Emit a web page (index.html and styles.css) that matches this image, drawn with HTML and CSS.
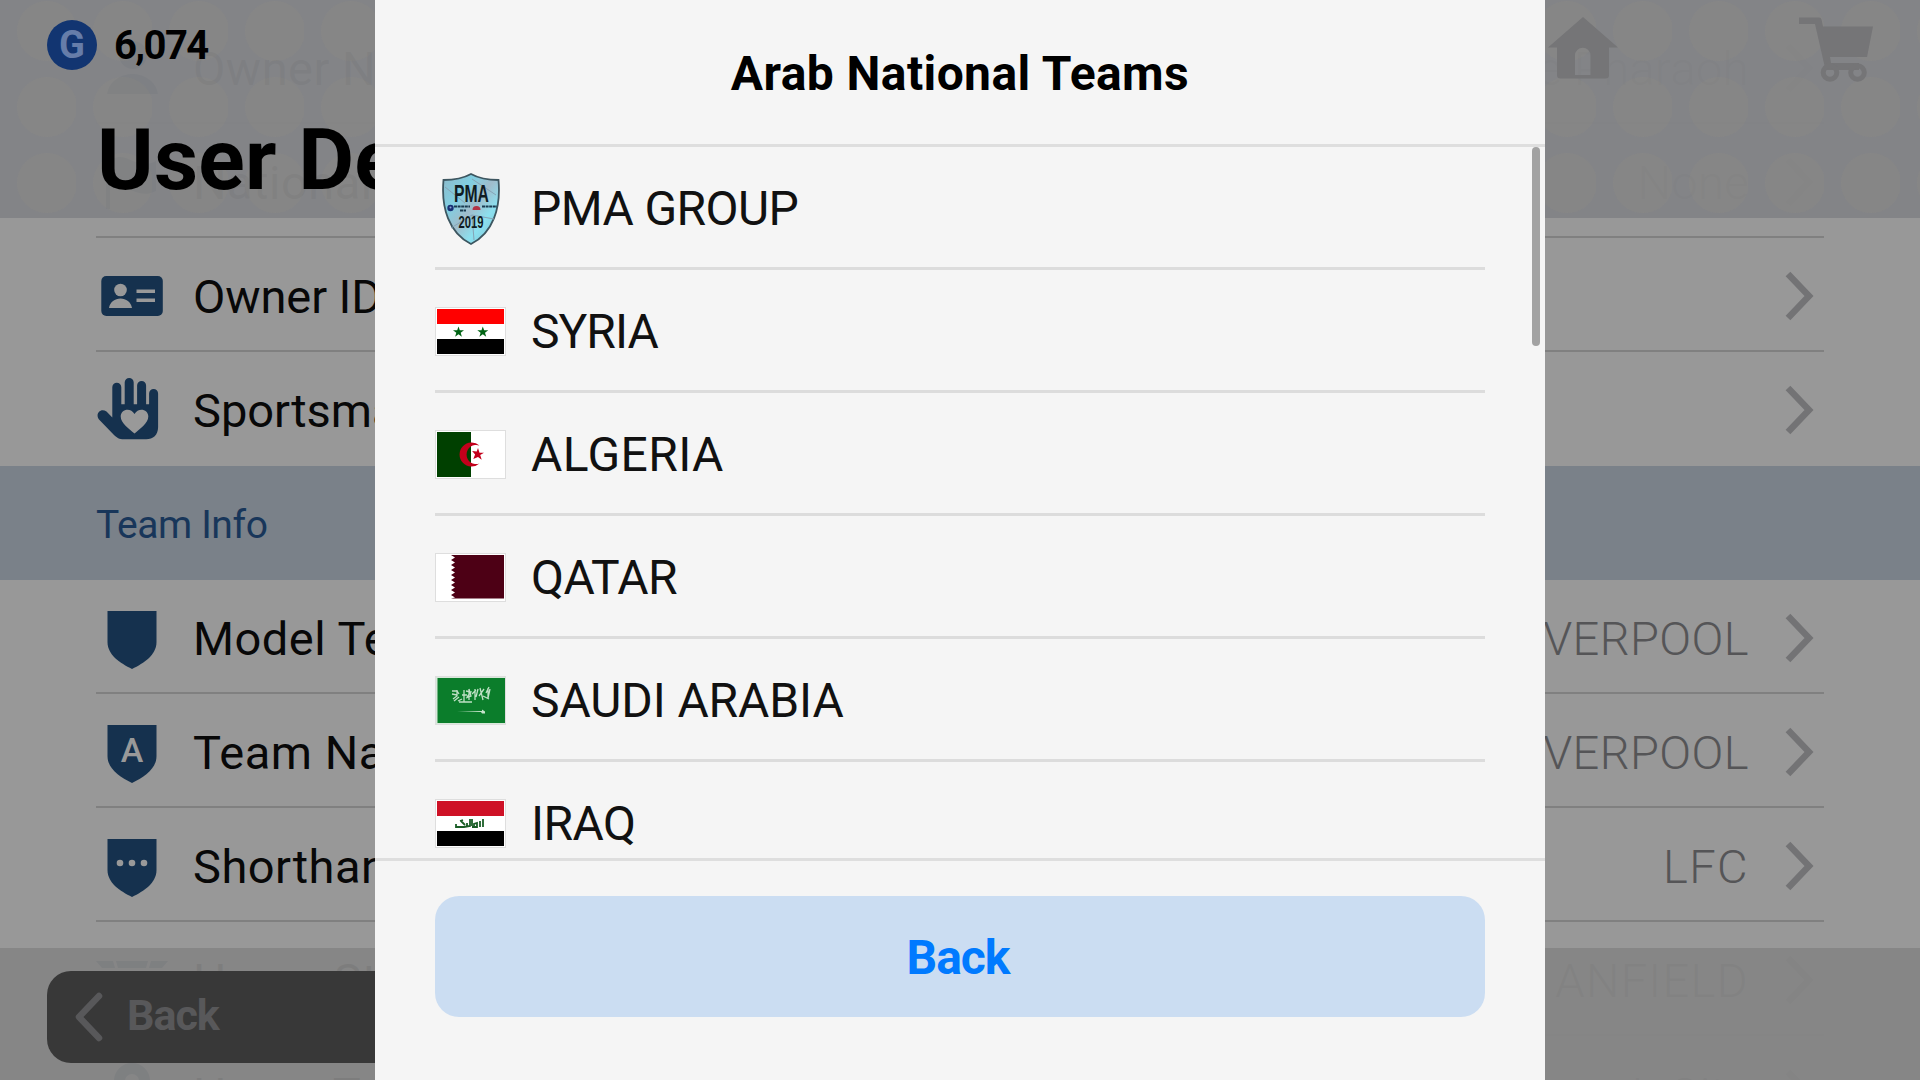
FILE: index.html
```
<!DOCTYPE html>
<html lang="en">
<head>
<meta charset="utf-8">
<title>User Details</title>
<link rel="stylesheet" href="styles.css">
</head>
<body>
<svg class="defs" aria-hidden="true">
  <symbol id="chevron" viewBox="0 0 30 50"><path d="M4 3 25 25 4 47" fill="none" stroke="currentColor" stroke-width="6.500"/></symbol>
  <symbol id="shield" viewBox="0 0 72 72"><path d="M11.500 10h49v31C60.500 54 48 62 36 68 24 62 11.500 54 11.500 41Z" fill="currentColor"/></symbol>
</svg>
<main class="screen">
  <section class="list">
    <div class="row"><svg class="icon" viewBox="0 0 72 72"><circle cx="37" cy="24" r="14"/><path d="M11 63C13 50 25 43 36.500 43S60 50 62 63Z"/></svg><span class="label">Owner Name</span><span class="value">The Pharaoh</span><svg class="chev"><use href="#chevron"/></svg></div>
    <div class="row"><svg class="icon" viewBox="0 0 72 72"><path d="M10 10h4v54h-4zM17 14c14-8 24 12 43 2v30c-19 10-29-10-43-2z"/></svg><span class="label">Nationality</span><span class="value">None</span><svg class="chev"><use href="#chevron"/></svg></div>
    <div class="row"><svg class="icon" viewBox="0 0 72 72"><rect x="5.300" y="17" width="61.500" height="40" rx="5"/><g fill="#999"><circle cx="24.500" cy="31" r="6.300"/><path d="M13 49c1-6 6-9.500 11.500-9.500S35 43 36 49zM40.500 30.500H59v3.500H40.500zM40.500 39.500H59V43H40.500z"/></g></svg><span class="label id">Owner ID</span><svg class="chev end"><use href="#chevron"/></svg></div>
    <div class="row last"><svg class="icon" viewBox="0 0 72 72"><path d="M16.300 44.500V14.200a4.500 4.500 0 0 1 9 0V31.300h3.400V9.500a4.500 4.500 0 0 1 9 0v21.800h3.400V12.500a4.500 4.500 0 0 1 9 0v18.800h3V20.500a4.500 4.500 0 0 1 9 0V54c0 8-5 12.300-12 12.300H28c-5 0-7-1.500-10-4.300L3 46.500c-4-5 1-12 7.500-8Z"/><path d="M38.500 60.500C33 56 24.700 50 24.700 43.500c0-7.500 10-9.500 13.800-2.500 3.800-7 13.800-5 13.800 2.500C52.300 50 44 56 38.500 60.500Z" fill="#999"/></svg><span class="label sport">Sportsmanship</span><svg class="chev end"><use href="#chevron"/></svg></div>
    <h2 class="band">Team Info</h2>
    <div class="row"><svg class="icon"><use href="#shield"/></svg><span class="label">Model Team</span><span class="value">LIVERPOOL</span><svg class="chev"><use href="#chevron"/></svg></div>
    <div class="row"><svg class="icon" viewBox="0 0 72 72"><use href="#shield"/><text class="mark" x="36" y="46.500">A</text></svg><span class="label">Team Name</span><span class="value">LIVERPOOL</span><svg class="chev"><use href="#chevron"/></svg></div>
    <div class="row"><svg class="icon" viewBox="0 0 72 72"><use href="#shield"/><g fill="#999"><circle cx="24" cy="34" r="3.300"/><circle cx="36" cy="34" r="3.300"/><circle cx="48" cy="34" r="3.300"/></g></svg><span class="label">Shorthand</span><span class="value wide">LFC</span><svg class="chev"><use href="#chevron"/></svg></div>
    <div class="row"><svg class="icon" viewBox="0 0 72 72"><path d="M0 18h17l2 7H6zM20 18h32l-2 7H22zM55 18h17l-6 7H53z"/></svg><span class="label">Home Stadium</span><span class="value wide">ANFIELD</span><svg class="chev"><use href="#chevron"/></svg></div>
    <div class="row"><svg class="icon" viewBox="0 0 72 72"><path fill-rule="evenodd" d="M36 6a18 18 0 0 1 18 18c0 14-18 38-18 38S18 38 18 24A18 18 0 0 1 36 6Zm0 11a7 7 0 1 0 0 14 7 7 0 0 0 0-14Z"/></svg><span class="label">Home Town</span><span class="value">L City</span><svg class="chev"><use href="#chevron"/></svg></div>
  </section>

  <header class="top">
    <div class="status">
      <span class="coin">G</span><span class="amount">6,074</span>
      <svg class="home" viewBox="0 0 70 63"><path fill-rule="evenodd" d="M35 0 70 30.500H61V58q0 3.500-3.500 3.500h-45Q9 61.500 9 58V30.500H0ZM27 58H42.500V38.500a7.750 7.750 0 0 0-15.500 0Z"/></svg>
      <svg class="cart" viewBox="0 0 75 66"><path d="M0 .5h20q2 0 2.500 2L24 9.500H74L68 40H31l1 6h28v7H26.500L16 7H0Z"/><g fill="none" stroke="#757577" stroke-width="5"><circle cx="31" cy="55.500" r="6.800"/><circle cx="58.500" cy="55.500" r="6.800"/></g></svg>
    </div>
    <h1 class="title">User Details</h1>
  </header>

  <footer class="bottom">
    <div class="back-dim"><svg viewBox="0 0 28 50"><path d="M24 4 4 25 24 46"/></svg><span>Back</span></div>
  </footer>
</main>

<section class="modal">
  <h2 class="modal-title"><span>Arab National Teams</span></h2>
  <div class="teams">
    <div class="team"><svg class="crest" viewBox="0 0 58 72"><defs><linearGradient id="ice" x2="1" y2="1"><stop offset="0" stop-color="#8fb9c9"/><stop offset=".3" stop-color="#80cfe2"/><stop offset=".5" stop-color="#a0bccb"/><stop offset=".7" stop-color="#8ce0ef"/><stop offset="1" stop-color="#79bfd0"/></linearGradient></defs><path d="M29 1C20 6 10 7 1.500 7-1 35 7 60 29 71 51 60 59 35 56.500 7 48 7 38 6 29 1Z" fill="url(#ice)" stroke="#3d5660" stroke-width="1.800"/><path d="M30 6 54 22M30 42 9 55M30 42l2 25M3 14l20 16M30 42 52 46" stroke="#86a3b5" stroke-width="1" fill="none"/><text x="29.500" y="28.500" font-size="23" textLength="35" lengthAdjust="spacingAndGlyphs">PMA</text><text x="29" y="54.500" font-size="16.500" textLength="25" lengthAdjust="spacingAndGlyphs">2019</text><path d="M12 33.500h16M40 33.500h15M18 37.500h6" stroke="#1b3b50" stroke-width="2.200" stroke-dasharray="3 .6"/><circle cx="8.500" cy="35" r="3.200" fill="#172f75"/><circle cx="8.500" cy="34.500" r="1" fill="#91a5d0"/><path d="M30.500 37a4 4 0 0 1 8 0z" fill="#b33345"/></svg><span>PMA GROUP</span></div>
    <div class="team"><svg class="flag" viewBox="0 0 69 47"><path fill="#fff" d="M0 0h69v47H0z"/><path fill="red" d="M1 1h67v15H1z"/><path d="M1 31h67v15H1z"/><path id="star" fill="#006414" d="m22.500 18.500 1.300 3.700h4.200l-3.300 2.500 1.200 4-3.400-2.400-3.400 2.400 1.200-4-3.300-2.500h4.200z"/><use href="#star" x="24.300"/></svg><span class="snug">SYRIA</span></div>
    <div class="team"><svg class="flag" viewBox="0 0 69 47"><path fill="#fff" d="M0 0h69v47H0z"/><path fill="#004000" d="M1 1h34v45H1z"/><path fill="#c3001b" d="M43.500 14.500a12 12 0 1 0 0 18 9.600 9.600 0 1 1 0-18ZM42 17l1.500 4.700h4.500l-3.800 2.300 1.500 4.700-3.700-2.600-4.700 1.900 1.800-4.400-3-3.500 4.600.4z"/></svg><span class="open">ALGERIA</span></div>
    <div class="team"><svg class="flag" viewBox="0 0 69 47"><path fill="#fff" d="M0 0h69v47H0z"/><path fill="#4d0015" d="M68 1H15l4 2.500-4 2.500 4 2.500-4 2.500 4 2.500-4 2.500 4 2.500-4 2.500 4 2.500-4 2.500 4 2.500-4 2.500 4 2.500-4 2.500 4 2.500-4 2.500 4 2.500-4 1h53z"/></svg><span>QATAR</span></div>
    <div class="team"><svg class="flag" viewBox="0 0 69 47"><path fill="#d8e9da" d="M0 0h69v47H0z"/><path fill="#0b7d2b" d="M1.500 1H69v45H1.500z"/><path d="M16 14h5l2 3m0 3-5 4m-2-7 5 1m0-5v6l-4 3m5 2 4-2m2-9v12h-5m7-11 5 1-4 5m-5-2h5m2-6v11m-5 2h8m-3-13 2 7-5 2m9-9v11m-3-6 4-4m2-1-2 8m4-9 3 12m1-11-5 7m9-8v10m2-9-2 9m-5-2 6 3m-3-6 3-6" fill="none" stroke="#bfe0c5" stroke-width="1.300"/><path d="M21 34h25v-1.500l3 2v2h-3l-1-1.500-24-1z" fill="#c7e4cc"/></svg><span class="saudi">SAUDI ARABIA</span></div>
    <div class="team"><svg class="flag" viewBox="0 0 69 47"><path fill="#fff" d="M0 0h69v47H0z"/><path fill="#ce1126" d="M1 1h67v15H1z"/><path d="M1 31h67v15H1z"/><path d="M20 28V24m0 3h8l6-1v-7m-9 2 4 4m-5-4 3-1m4 7v-4m5 3v-7m0 8h5v-4l-3 1v3m6 0v-6m3 6v-8" fill="none" stroke="#195d25" stroke-width="1.800"/></svg><span>IRAQ</span></div>
    <i class="scroll"></i>
  </div>
  <div class="modal-foot"><button class="back"><span>Back</span></button></div>
</section>
</body>
</html>
```
FILE: styles.css
```
* { box-sizing: border-box; }
body { margin: 0; width: 1920px; height: 1080px; overflow: hidden; position: relative; background: #989898; font-family: Roboto, "Liberation Sans", sans-serif; color: #080808; }
h1, h2 { margin: 0; }
.defs { position: absolute; width: 0; height: 0; }
.screen { height: 1080px; overflow: hidden; }

.list { padding-top: 10px; }
.row { display: flex; align-items: center; height: 114px; margin: 0 96px; padding: 2px 10px 0 0; border-bottom: 2px solid #808080; font-size: 47px; white-space: nowrap; }
.row.last { border-bottom: 0; padding-top: 0; }
.icon { width: 72px; height: 72px; flex: none; color: #15314e; fill: #15314e; }
.mark { font-size: 34px; font-weight: 500; fill: #999; text-anchor: middle; }
.label { flex: 1; padding: 2px 0 0 25px; letter-spacing: .5px; }
.label.id { letter-spacing: -.1px; }
.label.sport { letter-spacing: 0; }
.value { padding-top: 2px; color: #555557; font-weight: 300; letter-spacing: .4px; }
.value.wide { letter-spacing: 1.4px; }
.chev { width: 30px; height: 50px; color: #737375; margin: 1px 0 0 35px; flex: none; }
.band { height: 114px; display: flex; align-items: center; padding: 4px 96px 0; background: #7a8189; color: #18365a; font-size: 39px; font-weight: 400; letter-spacing: -.4px; }

.top { position: absolute; inset: 0 0 auto; height: 218px; isolation: isolate; color: #000; }
.top::before { content: ""; position: absolute; inset: 0; z-index: -1; opacity: .96; background: #838487 radial-gradient(circle at 47px 31px, #868686 29.500px, transparent 30.500px) 0 0 / 76px 76px; }
.status { display: flex; height: 90px; padding-left: 47px; align-items: center; }
.coin { width: 50px; height: 50px; border-radius: 50%; background: #123571; color: #667da9; font-size: 38px; font-weight: 700; line-height: 51px; text-align: center; }
.amount { margin-left: 17px; font-size: 40px; font-weight: 700; letter-spacing: -1.600px; }
.home { width: 70px; height: 63px; margin: 6px 181px 0 auto; fill: #757577; }
.cart { width: 75px; height: 66px; margin: 9px 46px 0 0; fill: #757577; }
.title { padding-left: 97px; font-size: 86px; line-height: 100px; margin-top: 20px; font-weight: 700; letter-spacing: .2px; }

.bottom { position: absolute; inset: 948px 0 0; padding: 23px 47px; background: rgba(133, 133, 133, .94); }
.back-dim { display: flex; align-items: center; width: 440px; height: 92px; padding-left: 28px; border-radius: 24px; background: #383838; color: #58585a; font-size: 43px; font-weight: 700; letter-spacing: -1px; }
.back-dim span { padding-bottom: 4px; }
.back-dim svg { width: 28px; height: 50px; margin-right: 24px; fill: none; stroke: #58585a; stroke-width: 6.500; stroke-linecap: round; stroke-linejoin: round; }

.modal { position: absolute; inset: 0 375px; display: flex; flex-direction: column; background: #f5f5f5; color: #111; }
.modal-title { height: 147px; display: flex; align-items: center; justify-content: center; padding-top: 3px; border-bottom: 3px solid #dedede; font-size: 48px; font-weight: 700; letter-spacing: .4px; color: #000; }
.teams { position: relative; height: 711px; overflow: hidden; padding: 0 60px; }
.team { display: flex; align-items: center; height: 123px; border-bottom: 3px solid #dcdcdc; font-size: 48px; white-space: nowrap; }
.team span { padding-top: 2px; margin-left: 26px; letter-spacing: -.6px; }
.team .snug { letter-spacing: -1px; }
.team .open { letter-spacing: .4px; }
.team .saudi { letter-spacing: -.1px; }
.flag { width: 69px; height: 47px; margin: 3px 0 0 1px; outline: 1px solid #dedede; }
.crest { width: 58px; height: 72px; margin: 3px 5px 0 7px; font-family: "Liberation Sans Narrow", "Liberation Sans", sans-serif; font-weight: 700; text-anchor: middle; fill: #101b22; }
.scroll { position: absolute; top: 0; right: 5px; width: 8px; height: 199px; border-radius: 4px; background: #a2a2a2; }
.modal-foot { flex: 1; border-top: 3px solid #dedede; padding: 35px 60px; }
.back { display: block; width: 100%; height: 121px; border: 0; border-radius: 24px; background: #cbddf2; color: #007aff; font: 700 48px Roboto, sans-serif; padding: 2px 4px 0 0; letter-spacing: -1px; }
```
